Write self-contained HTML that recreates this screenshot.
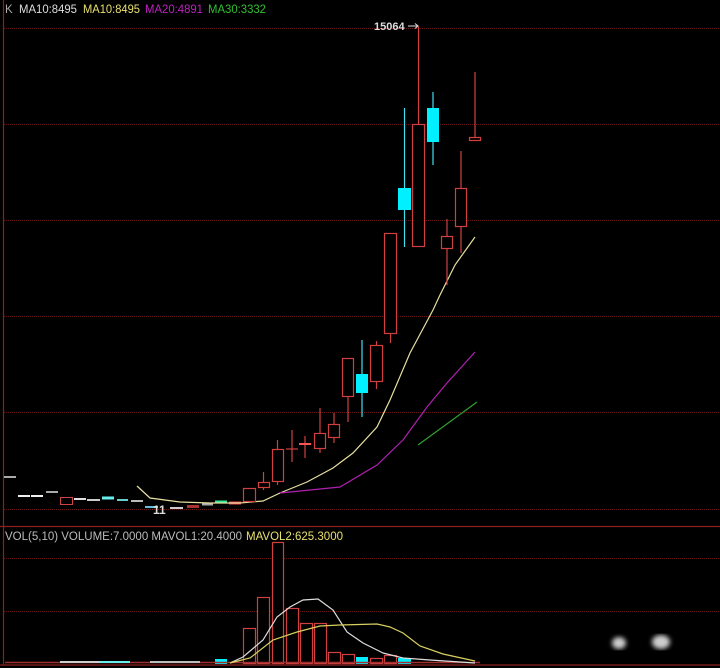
<!DOCTYPE html>
<html><head><meta charset="utf-8"><style>
html,body{margin:0;padding:0;background:#000;width:720px;height:668px;overflow:hidden}
svg{display:block}
text{font-family:"Liberation Sans",sans-serif}
</style></head><body>
<svg width="720" height="668" viewBox="0 0 720 668" xmlns="http://www.w3.org/2000/svg">
<rect width="720" height="668" fill="#000"/>
<g stroke="#6a1414" stroke-width="1" stroke-dasharray="1,1">
<line x1="4" y1="28.5" x2="720" y2="28.5"/>
<line x1="4" y1="124.5" x2="720" y2="124.5"/>
<line x1="4" y1="220.5" x2="720" y2="220.5"/>
<line x1="4" y1="316.5" x2="720" y2="316.5"/>
<line x1="4" y1="412.5" x2="720" y2="412.5"/>
<line x1="4" y1="509.5" x2="720" y2="509.5"/>
<line x1="4" y1="558.5" x2="720" y2="558.5"/>
<line x1="4" y1="611.5" x2="720" y2="611.5"/>
</g>
<g stroke="#8a2020" stroke-width="1.2">
<line x1="3.5" y1="0" x2="3.5" y2="665"/>
<line x1="0" y1="526.5" x2="720" y2="526.5"/>
<line x1="0" y1="665" x2="720" y2="665"/>
</g>
<text x="5" y="13" font-size="11.5" fill="#aaa">K</text>
<text x="19" y="13" font-size="11.5" fill="#ddd" textLength="58" lengthAdjust="spacingAndGlyphs">MA10:8495</text>
<text x="83" y="13" font-size="11.5" fill="#e8e070" textLength="57" lengthAdjust="spacingAndGlyphs">MA10:8495</text>
<text x="145" y="13" font-size="11.5" fill="#c020c0" textLength="58" lengthAdjust="spacingAndGlyphs">MA20:4891</text>
<text x="208" y="13" font-size="11.5" fill="#30c030" textLength="58" lengthAdjust="spacingAndGlyphs">MA30:3332</text>
<text x="374" y="30" font-size="11" font-weight="bold" fill="#ddd">15064</text>
<path d="M408 26 H418 M415 23.5 L418 26 L415 28.5" stroke="#ddd" fill="none"/>
<g stroke-width="2">
<line x1="4" y1="477" x2="16" y2="477" stroke="#aaa"/>
<line x1="18" y1="496" x2="30" y2="496" stroke="#eee"/>
<line x1="31" y1="496" x2="43" y2="496" stroke="#eee"/>
<line x1="46" y1="492" x2="58" y2="492" stroke="#aaa"/>
<line x1="74" y1="499" x2="86" y2="499" stroke="#ddd"/>
<line x1="87" y1="500" x2="100" y2="500" stroke="#ccc"/>
<line x1="102" y1="498" x2="114" y2="498" stroke="#6ee" stroke-width="3"/>
<line x1="117" y1="500" x2="128" y2="500" stroke="#6cc"/>
<line x1="131" y1="501" x2="143" y2="501" stroke="#bbb"/>
<line x1="145" y1="507" x2="158" y2="507" stroke="#6bd"/>
<line x1="170" y1="508" x2="183" y2="508" stroke="#ccc"/>
<line x1="202" y1="504" x2="213" y2="504" stroke="#aaa" stroke-width="3"/>
<line x1="215" y1="502" x2="227" y2="502" stroke="#3e9" stroke-width="3"/>
<line x1="229" y1="503" x2="241" y2="503" stroke="#e44" stroke-width="3"/>
</g>
<rect x="60.5" y="497.5" width="12" height="7" fill="none" stroke="#c44"/>
<rect x="187" y="505" width="12" height="3" fill="#a33"/>
<text x="153" y="514" font-size="12" font-weight="bold" fill="#ddd">11</text>
<polyline fill="none" stroke="#e8e0a0" stroke-width="1.2" points="137,486 150,498 180,502 210,503 240,503 263,501 280,493 307,482 333,468 353,453 377,427 390,400 410,353 433,310 440,295 455,265 475,237"/>
<polyline fill="none" stroke="#b020b0" stroke-width="1.2" points="280,493 340,487 377,465 403,440 427,407 447,383 475,352"/>
<polyline fill="none" stroke="#30a030" stroke-width="1.2" points="418,445 477,402"/>
<g stroke="#d04040" fill="#000" stroke-width="1.2">
<rect x="243.5" y="488.5" width="12" height="13"/>
<line x1="263.5" y1="472" x2="263.5" y2="490"/><rect x="258.5" y="482.5" width="11" height="5"/>
<line x1="277.5" y1="440" x2="277.5" y2="485"/><rect x="272.5" y="449.5" width="11" height="32"/>
<line x1="292" y1="430" x2="292" y2="462"/><line x1="286" y1="449" x2="298" y2="449"/>
<line x1="305" y1="436" x2="305" y2="458"/><line x1="299" y1="444" x2="311" y2="444" stroke="#f55" stroke-width="2"/>
<line x1="320" y1="408" x2="320" y2="453"/><rect x="314.5" y="433.5" width="11" height="15"/>
<line x1="334" y1="413" x2="334" y2="443"/><rect x="328.5" y="424.5" width="11" height="13"/>
<line x1="348" y1="396" x2="348" y2="422"/><rect x="342.5" y="358.5" width="11" height="38"/>
<line x1="376.5" y1="341" x2="376.5" y2="389"/><rect x="370.5" y="345.5" width="12" height="36"/>
<line x1="390.5" y1="333" x2="390.5" y2="343"/><rect x="384.5" y="233.5" width="12" height="100"/>
<line x1="418.5" y1="26" x2="418.5" y2="124"/><rect x="412.5" y="124.5" width="12" height="122"/>
<line x1="447" y1="219" x2="447" y2="285"/><rect x="441.5" y="236.5" width="11" height="12"/>
<line x1="461" y1="151" x2="461" y2="253"/><rect x="455.5" y="188.5" width="11" height="38"/>
<line x1="475" y1="72" x2="475" y2="137"/><rect x="469.5" y="137.5" width="11" height="3"/>
</g>
<g stroke="#40e0f0" stroke-width="1.2">
<line x1="362" y1="340" x2="362" y2="417"/>
<line x1="404.5" y1="108" x2="404.5" y2="247"/>
<line x1="433" y1="92" x2="433" y2="165"/>
</g>
<g fill="#00f0ff">
<rect x="356" y="374" width="12" height="19"/>
<rect x="398" y="188" width="13" height="22"/>
<rect x="427" y="108" width="12" height="34"/>
</g>
<text x="5" y="540" font-size="11.5" fill="#bbb" textLength="237" lengthAdjust="spacingAndGlyphs">VOL(5,10) VOLUME:7.0000 MAVOL1:20.4000</text>
<text x="246" y="540" font-size="11.5" fill="#e8e070" textLength="97" lengthAdjust="spacingAndGlyphs">MAVOL2:625.3000</text>
<g stroke="#d04040" fill="#000" stroke-width="1.2">
<rect x="243.5" y="628.5" width="12" height="35"/>
<rect x="257.5" y="597.5" width="12" height="66"/>
<rect x="272.5" y="542.5" width="11" height="121"/>
<rect x="286.5" y="608.5" width="12" height="55"/>
<rect x="300.5" y="623.5" width="12" height="40"/>
<rect x="314.5" y="623.5" width="12" height="40"/>
<rect x="328.5" y="652.5" width="12" height="11"/>
<rect x="342.5" y="654.5" width="12" height="9"/>
<rect x="370.5" y="658.5" width="12" height="5"/>
<rect x="384.5" y="655.5" width="12" height="8"/>
</g>
<g fill="#00f0ff">
<rect x="356" y="657" width="12" height="7"/>
<rect x="398" y="658" width="13" height="6"/>
<rect x="215" y="659" width="12" height="5"/>
</g>
<line x1="5" y1="662.5" x2="480" y2="662.5" stroke="#a03030" stroke-width="1.5"/>
<g stroke-width="2"><line x1="60" y1="662" x2="120" y2="662" stroke="#ccc"/><line x1="100" y1="662" x2="130" y2="662" stroke="#6ee"/><line x1="150" y1="662" x2="200" y2="662" stroke="#bbb"/></g>
<polyline fill="none" stroke="#ddd" stroke-width="1.2" points="230,663 243,657 263,640 277,617 290,607 303,600 318,599 333,610 347,632 363,643 383,653 403,658 430,660 475,663"/>
<polyline fill="none" stroke="#d8d060" stroke-width="1.2" points="230,663 250,658 273,640 297,632 320,626 340,625 377,624 390,627 403,633 420,646 443,654 475,661"/>
<defs><filter id="b"><feGaussianBlur stdDeviation="2.5"/></filter></defs>
<g filter="url(#b)" fill="#ccc">
<ellipse cx="619" cy="643" rx="7" ry="6"/>
<ellipse cx="661" cy="642" rx="9" ry="7"/>
</g>
</svg>
</body></html>
